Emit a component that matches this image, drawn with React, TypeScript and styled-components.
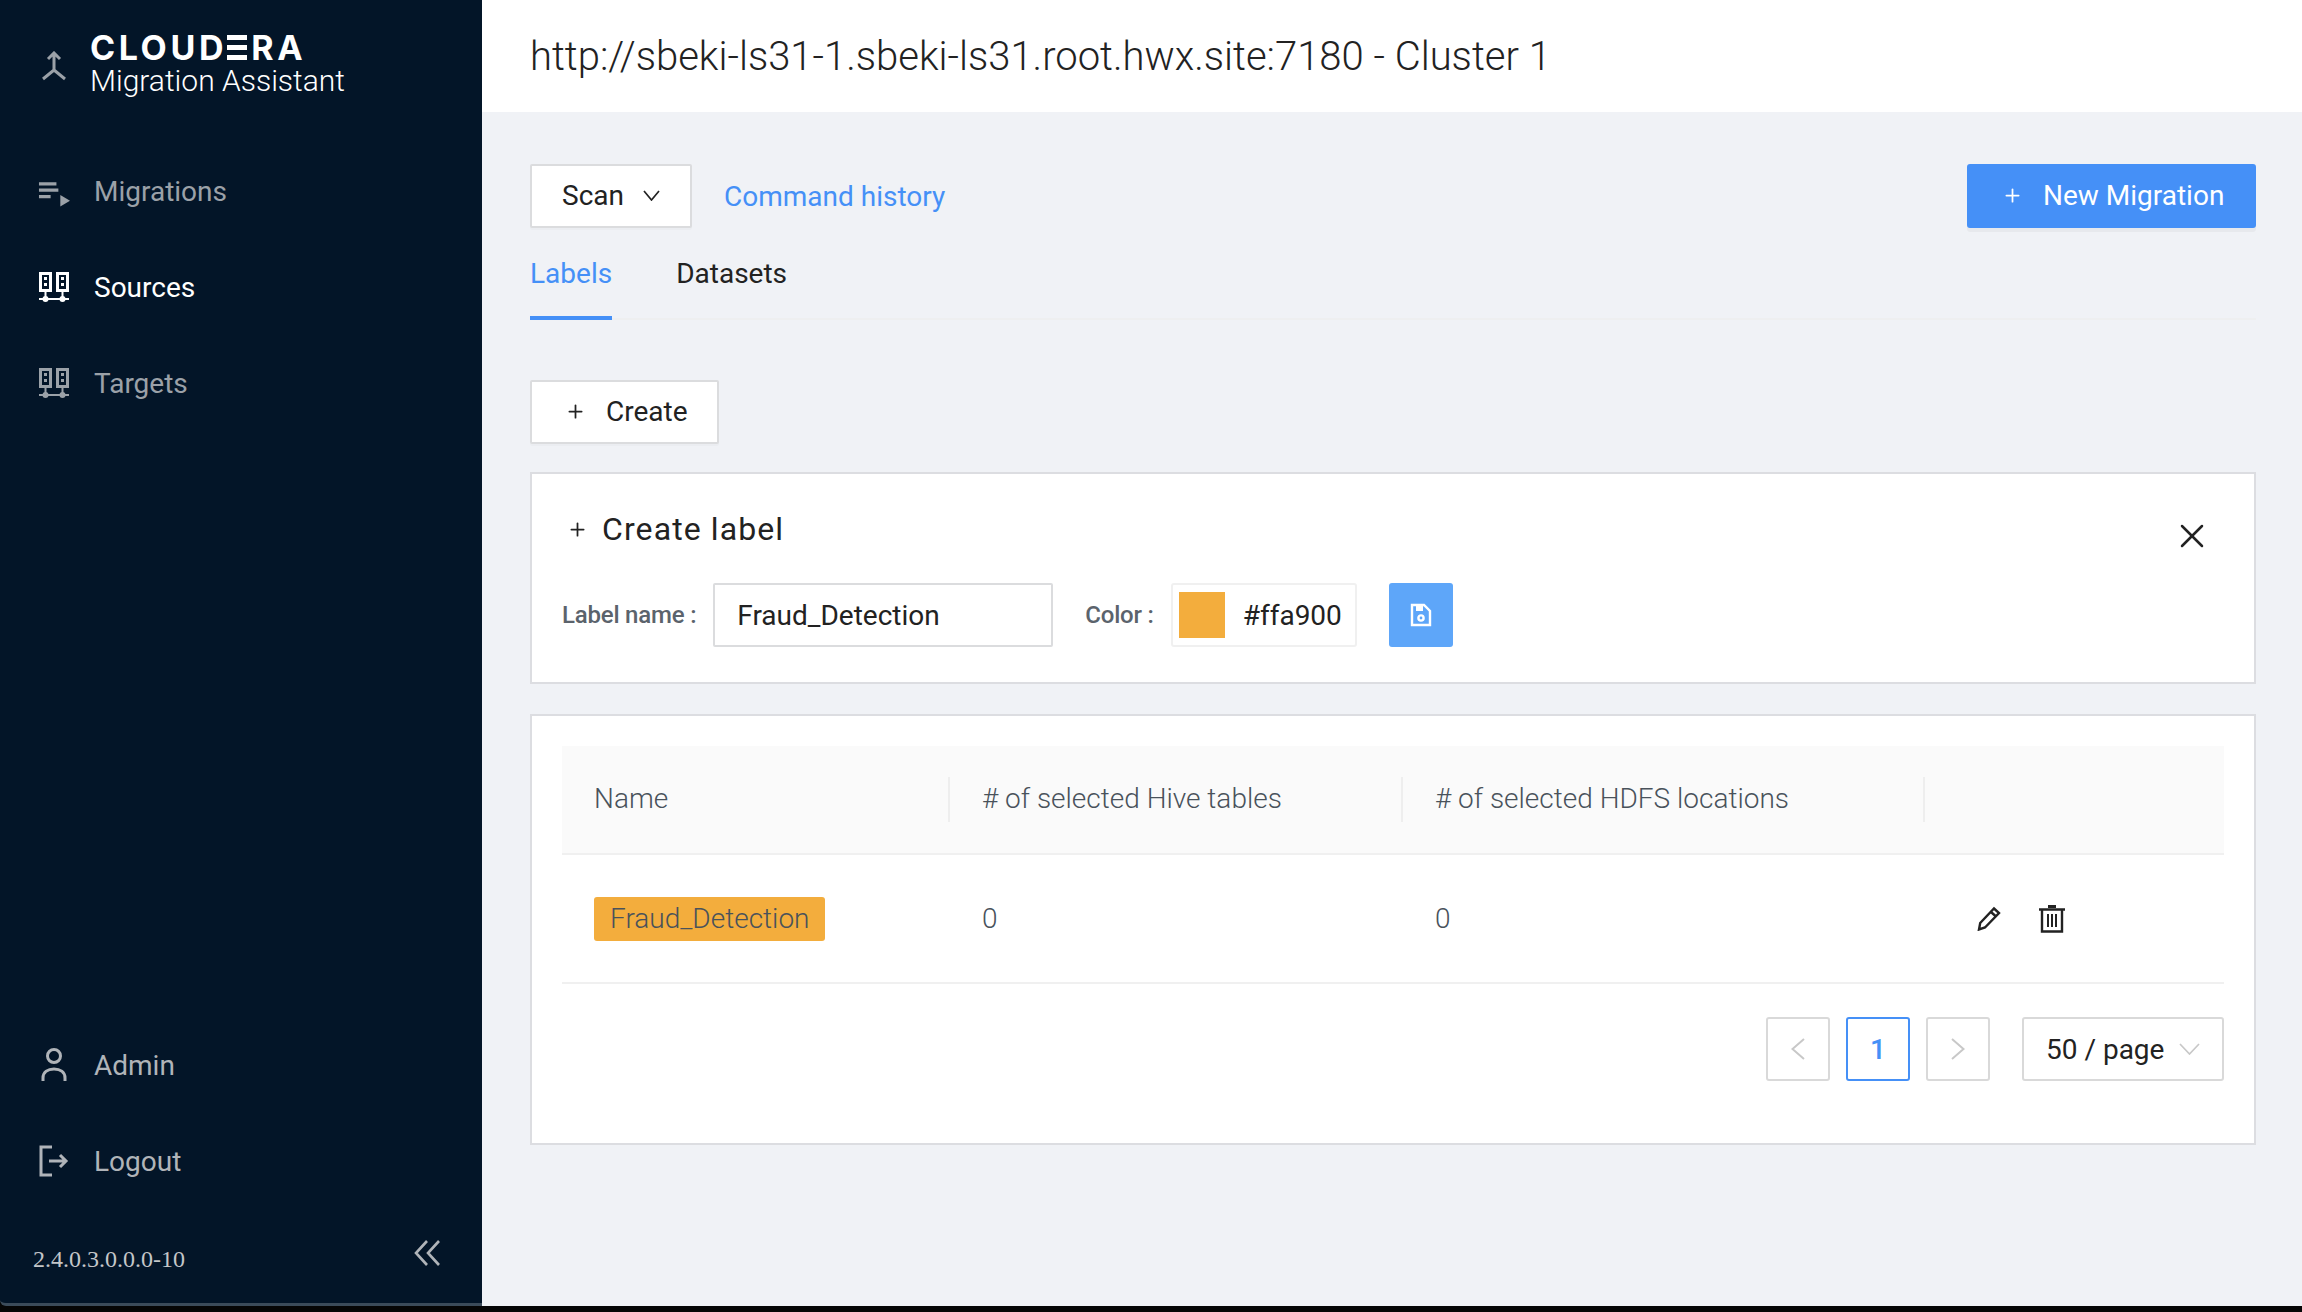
import React from "react";
import styled, { createGlobalStyle } from "styled-components";
import { Plus, X } from "lucide-react";

const GlobalStyle = createGlobalStyle`
  html, body {
    margin: 0;
    padding: 0;
    background: #060606;
  }
  * {
    box-sizing: border-box;
  }
`;

const TrackerIcon: React.FC<{ color: string }> = ({ color }) => (
  <svg width="30" height="30" viewBox="0 0 30 30" fill="none">
    <path
      d="M1.5 1.5h10v17h-10zM18.5 1.5h10v17h-10z"
      stroke={color}
      strokeWidth="3"
    />
    <path d="M5 5h3v3H5zM5 11h3v3H5zM22 5h3v3h-3zM22 11h3v3h-3z" fill={color} />
    <path d="M6.5 19v6M23.5 19v6M0 27h30" stroke={color} strokeWidth="2" />
    <circle cx="6.5" cy="27" r="3" fill={color} />
    <circle cx="23.5" cy="27" r="3" fill={color} />
  </svg>
);

const MigrationsIcon = () => (
  <svg width="33" height="38" viewBox="0 0 33 38" fill="#9ba1a8">
    <path d="M1 10h18v3.4H1zM1 16.3h20v3.4H1zM1 23h12v3.4H1z" />
    <path d="M23 23l10 6-10 6z" />
  </svg>
);

const MergeIcon = () => (
  <svg width="26" height="32" viewBox="0 0 26 32" fill="none" stroke="#9ba1a8" strokeWidth="3">
    <path d="M7 8l6-6 6 6M13 3v16M2 28l11-9 11 9" />
  </svg>
);

const UserIcon = () => (
  <svg width="26" height="36" viewBox="0 0 26 36" fill="none" stroke="#b0b4b9" strokeWidth="3">
    <circle cx="13" cy="9" r="6.5" />
    <path d="M2 34v-3c0-6 5-9 11-9s11 3 11 9v3" />
  </svg>
);

const LogoutIcon = () => (
  <svg width="30" height="32" viewBox="0 0 30 32" fill="none" stroke="#b0b4b9" strokeWidth="3">
    <path d="M13 2H2v28h11M10 16h17M21 10l6 6-6 6" />
  </svg>
);

const CollapseIcon = () => (
  <svg width="26" height="26" viewBox="0 0 26 26" fill="none" stroke="#b0b4b9" strokeWidth="2.6">
    <path d="M13 1L2 13l11 12M25 1L14 13l11 12" />
  </svg>
);

const SaveIcon = () => (
  <svg width="22" height="24" viewBox="0 0 22 24" fill="none" stroke="#fff" strokeWidth="2.4">
    <path d="M2 2h12l6 6v14H2z" />
    <path d="M6 2v6h7V2" fill="#fff" stroke="none" />
    <circle cx="11" cy="15" r="2.6" />
  </svg>
);

const PencilIcon = () => (
  <svg width="24" height="25" viewBox="0 0 24 25" fill="none" stroke="#222" strokeWidth="2.4">
    <path d="M17 2.5l5 4.5L8 21.5l-6 2 1.2-6.5zM14 6l5 4.5" />
  </svg>
);

const TrashIcon = () => (
  <svg width="26" height="28" viewBox="0 0 26 28" fill="none" stroke="#222" strokeWidth="2.4">
    <path d="M0 4.5h26M3 4.5v22h20v-22" />
    <path d="M9 1.5h8" strokeWidth="3" />
    <path d="M9 9v13M13 9v13M17 9v13" strokeWidth="2" />
  </svg>
);

const Caret: React.FC<{ width: number; height: number; color: string; line: number }> = ({
  width,
  height,
  color,
  line,
}) => (
  <svg width={width} height={height} viewBox={`0 0 ${width} ${height}`} fill="none" stroke={color} strokeWidth={line}>
    <path d={`M1 1L${width / 2} ${height - 1}L${width - 1} 1`} />
  </svg>
);

const Arrow: React.FC<{ back?: boolean }> = ({ back }) => (
  <svg width="14" height="22" viewBox="0 0 14 22" fill="none" stroke="#c8c8c8" strokeWidth="2">
    <path d={back ? "M13 1L1.5 11L13 21" : "M1 1L12.5 11L1 21"} />
  </svg>
);

const App: React.FC = () => (
  <Page>
    <GlobalStyle />
    <Window>
      <Sidebar>
        <Brand>
          <MergeIcon />
          <BrandText>
            <LogoWord>
              CLOUD<LogoE>E</LogoE>RA
            </LogoWord>
            <ProductName>Migration Assistant</ProductName>
          </BrandText>
        </Brand>
        <Nav>
          <NavItem>
            <NavIcon>
              <MigrationsIcon />
            </NavIcon>
            Migrations
          </NavItem>
          <NavItem $active>
            <NavIcon>
              <TrackerIcon color="#ffffff" />
            </NavIcon>
            Sources
          </NavItem>
          <NavItem>
            <NavIcon>
              <TrackerIcon color="#9ba1a8" />
            </NavIcon>
            Targets
          </NavItem>
        </Nav>
        <BottomNav>
          <NavItem $light>
            <NavIcon>
              <UserIcon />
            </NavIcon>
            Admin
          </NavItem>
          <NavItem $light>
            <NavIcon>
              <LogoutIcon />
            </NavIcon>
            Logout
          </NavItem>
        </BottomNav>
        <SidebarFooter>
          <Version>2.4.0.3.0.0.0-10</Version>
          <CollapseIcon />
        </SidebarFooter>
      </Sidebar>
      <Main>
        <Header>http://sbeki-ls31-1.sbeki-ls31.root.hwx.site:7180 - Cluster 1</Header>
        <Content>
          <Toolbar>
            <Button>
              Scan
              <Caret width={17} height={11} color="#222222" line={1.7} />
            </Button>
            <TextLink>Command history</TextLink>
            <PrimaryButton>
              <Plus size={21} strokeWidth={2} />
              New Migration
            </PrimaryButton>
          </Toolbar>
          <Tabs>
            <Tab $active>Labels</Tab>
            <Tab>Datasets</Tab>
          </Tabs>
          <CreateButton>
            <Plus size={21} strokeWidth={2} />
            Create
          </CreateButton>
          <CreatePanel>
            <PanelTitle>
              <Plus size={21} strokeWidth={2} />
              Create label
            </PanelTitle>
            <CloseButton>
              <X size={40} strokeWidth={1.5} />
            </CloseButton>
            <Form>
              <FieldLabel>Label name :</FieldLabel>
              <NameInput>Fraud_Detection</NameInput>
              <FieldLabel $gap>Color :</FieldLabel>
              <ColorPicker>
                <Swatch />
                #ffa900
              </ColorPicker>
              <SaveButton>
                <SaveIcon />
              </SaveButton>
            </Form>
          </CreatePanel>
          <TablePanel>
            <HeadRow>
              <HeadCell>Name</HeadCell>
              <HeadCell>
                # of selected Hive tables
              </HeadCell>
              <HeadCell>
                # of selected HDFS locations
              </HeadCell>
              <HeadCell />
            </HeadRow>
            <BodyRow>
              <BodyCell>
                <Tag>Fraud_Detection</Tag>
              </BodyCell>
              <BodyCell>0</BodyCell>
              <BodyCell>0</BodyCell>
              <ActionCell>
                <PencilIcon />
                <TrashIcon />
              </ActionCell>
            </BodyRow>
            <Pagination>
              <PageButton>
                <Arrow back />
              </PageButton>
              <PageButton $current>1</PageButton>
              <PageButton>
                <Arrow />
              </PageButton>
              <PageSize>
                50 / page
                <Caret width={21} height={12} color="#c8c8c8" line={1.7} />
              </PageSize>
            </Pagination>
          </TablePanel>
        </Content>
      </Main>
    </Window>
  </Page>
);

export default App;

const Page = styled.div`
  width: 2302px;
  height: 1312px;
  overflow: hidden;
  font-family: Roboto, "Liberation Sans", sans-serif;
`;

const Window = styled.div`
  display: flex;
  height: 1306px;
`;

const Sidebar = styled.aside`
  width: 482px;
  flex: none;
  display: flex;
  flex-direction: column;
  background: #031528;
  border-bottom: 3px solid #3b4b5a;
  border-bottom-left-radius: 6px;
`;

const Brand = styled.div`
  display: flex;
  align-items: center;
  gap: 23px;
  height: 112px;
  padding: 22px 0 0 41px;
`;

const BrandText = styled.div`
  display: flex;
  flex-direction: column;
  margin-top: -2px;
`;

const LogoWord = styled.div`
  font-family: Inter, "Liberation Sans", sans-serif;
  font-size: 34px;
  line-height: 30px;
  font-weight: 700;
  letter-spacing: 3.6px;
  color: #ffffff;
`;

const LogoE = styled.span`
  color: transparent;
  background: linear-gradient(
    #ffffff 0 5px,
    transparent 5px 10px,
    #ffffff 10px 15px,
    transparent 15px 20px,
    #ffffff 20px 25px,
    transparent 25px
  );
  background-size: calc(100% - 3.6px) 25px;
  background-position: 0 center;
  background-repeat: no-repeat;
`;

const ProductName = styled.div`
  font-size: 30px;
  line-height: 36px;
  font-weight: 300;
  color: #ffffff;
`;

const Nav = styled.nav`
  display: flex;
  flex-direction: column;
  padding-top: 31px;
`;

const BottomNav = styled(Nav)`
  margin-top: auto;
  padding-top: 0;
`;

const NavItem = styled.div<{ $active?: boolean; $light?: boolean }>`
  display: flex;
  align-items: center;
  height: 96px;
  padding-left: 38px;
  font-size: 28px;
  color: ${(p) => (p.$active ? "#ffffff" : p.$light ? "#b0b4b9" : "#9ba1a8")};
`;

const NavIcon = styled.span`
  display: flex;
  justify-content: center;
  width: 32px;
  margin-right: 24px;
`;

const SidebarFooter = styled.div`
  display: flex;
  align-items: center;
  justify-content: space-between;
  height: 80px;
  padding: 0 42px 0 33px;
  margin: 4px 0 10px;
`;

const Version = styled.span`
  font-family: "Liberation Serif", serif;
  font-size: 24px;
  color: #c4c6c9;
  padding-top: 12px;
`;

const Main = styled.main`
  flex: 1;
  display: flex;
  flex-direction: column;
  background: #f0f2f6;
`;

const Header = styled.header`
  display: flex;
  align-items: center;
  height: 112px;
  padding-left: 48px;
  background: #ffffff;
  font-size: 40px;
  font-weight: 300;
  color: #222222;
`;

const Content = styled.div`
  display: flex;
  flex-direction: column;
  align-items: flex-start;
  padding: 52px 46px 0 48px;
`;

const Toolbar = styled.div`
  display: flex;
  align-items: center;
  width: 100%;
  height: 64px;
`;

const Button = styled.button`
  display: flex;
  align-items: center;
  height: 64px;
  gap: 19px;
  padding: 0 30px 2px;
  background: #ffffff;
  border: 2px solid #dbdcde;
  border-radius: 2px;
  box-shadow: 0 2px 0 rgba(0, 0, 0, 0.02);
  font-family: inherit;
  font-size: 28px;
  color: #222222;
`;

const TextLink = styled.a`
  margin-left: 32px;
  font-size: 28px;
  color: #4590f7;
`;

const PrimaryButton = styled(Button)`
  margin-left: auto;
  width: 289px;
  gap: 20px;
  padding: 0 0 2px 33px;
  background: #4590f7;
  border-color: #4590f7;
  border-radius: 3px;
  box-shadow: 0 4px 0 rgba(0, 0, 0, 0.035);
  color: #ffffff;
`;

const Tabs = styled.div`
  display: flex;
  gap: 64px;
  width: 100%;
  height: 92px;
  border-bottom: 2px solid #eeeff0;
`;

const Tab = styled.div<{ $active?: boolean }>`
  display: flex;
  align-items: center;
  height: 92px;
  padding-top: 2px;
  font-size: 28px;
  color: ${(p) => (p.$active ? "#4590f7" : "#222222")};
  border-bottom: 4px solid ${(p) => (p.$active ? "#4590f7" : "transparent")};
`;

const CreateButton = styled(Button)`
  margin-top: 60px;
  gap: 20px;
  padding: 0 29px 2px 33px;
`;

const CreatePanel = styled.section`
  position: relative;
  width: 100%;
  height: 212px;
  margin-top: 28px;
  padding: 36px 30px 0;
  background: #ffffff;
  border: 2px solid #dcdde1;
`;

const PanelTitle = styled.div`
  display: flex;
  align-items: center;
  gap: 14px;
  padding-left: 5px;
  font-size: 32px;
  letter-spacing: 1.1px;
  color: #222222;
`;

const CloseButton = styled.span`
  position: absolute;
  top: 42px;
  right: 42px;
  display: flex;
  color: #222222;
`;

const Form = styled.div`
  display: flex;
  align-items: center;
  margin-top: 35px;
`;

const FieldLabel = styled.span<{ $gap?: boolean }>`
  margin-left: ${(p) => (p.$gap ? "32px" : "0")};
  margin-right: 17px;
  font-size: 24px;
  font-weight: 500;
  letter-spacing: -0.2px;
  color: #5b636c;
`;

const NameInput = styled.div`
  display: flex;
  align-items: center;
  width: 340px;
  height: 64px;
  padding-left: 22px;
  border: 2px solid #dbdcde;
  border-radius: 2px;
  font-size: 28px;
  color: #222222;
`;

const ColorPicker = styled.div`
  display: flex;
  align-items: center;
  gap: 18px;
  width: 186px;
  height: 64px;
  padding-left: 6px;
  border: 2px solid #f0f0f0;
  border-radius: 3px;
  font-size: 28px;
  color: #222222;
`;

const Swatch = styled.span`
  width: 46px;
  height: 46px;
  background: #f3ad3d;
`;

const SaveButton = styled.span`
  display: flex;
  align-items: center;
  justify-content: center;
  width: 64px;
  height: 64px;
  margin-left: 32px;
  background: #5ea6f9;
  border-radius: 3px;
`;

const TablePanel = styled.section`
  width: 100%;
  height: 431px;
  margin-top: 30px;
  padding: 30px 30px 0;
  background: #ffffff;
  border: 2px solid #dcdde1;
`;

const HeadRow = styled.div`
  display: grid;
  grid-template-columns: 388px 453px 522px 1fr;
  align-items: center;
  height: 109px;
  background: #fafafa;
  border-bottom: 2px solid #f0f0f0;
`;

const HeadCell = styled.div`
  display: flex;
  align-items: center;
  height: 45px;
  padding: 0 0 2px 32px;
  font-size: 28px;
  font-weight: 300;
  color: #49525b;
  border-right: 2px solid #eeeeee;

  &:last-child {
    border-right: none;
  }
`;

const BodyRow = styled.div`
  display: grid;
  grid-template-columns: 388px 453px 522px 1fr;
  align-items: center;
  height: 129px;
  border-bottom: 2px solid #f0f0f0;
`;

const BodyCell = styled.div`
  padding-left: 32px;
  font-size: 28px;
  font-weight: 300;
  color: #49525b;
`;

const ActionCell = styled.div`
  display: flex;
  align-items: center;
  gap: 38px;
  padding-left: 52px;
`;

const Tag = styled.span`
  display: inline-flex;
  align-items: center;
  height: 44px;
  padding: 0 16px;
  background: #f3ad3d;
  border-radius: 3px;
`;

const Pagination = styled.div`
  display: flex;
  align-items: center;
  gap: 16px;
  justify-content: flex-end;
  margin-top: 33px;
`;

const PageButton = styled.span<{ $current?: boolean }>`
  display: flex;
  align-items: center;
  justify-content: center;
  width: 64px;
  height: 64px;
  border: 2px solid ${(p) => (p.$current ? "#4590f7" : "#d9d9d9")};
  border-radius: 3px;
  font-size: 28px;
  font-weight: 500;
  color: #4590f7;
`;

const PageSize = styled.span`
  display: flex;
  align-items: center;
  justify-content: space-between;
  width: 202px;
  height: 64px;
  margin-left: 16px;
  padding: 0 22px;
  border: 2px solid #d9d9d9;
  border-radius: 3px;
  font-size: 28px;
  color: #222222;
`;
